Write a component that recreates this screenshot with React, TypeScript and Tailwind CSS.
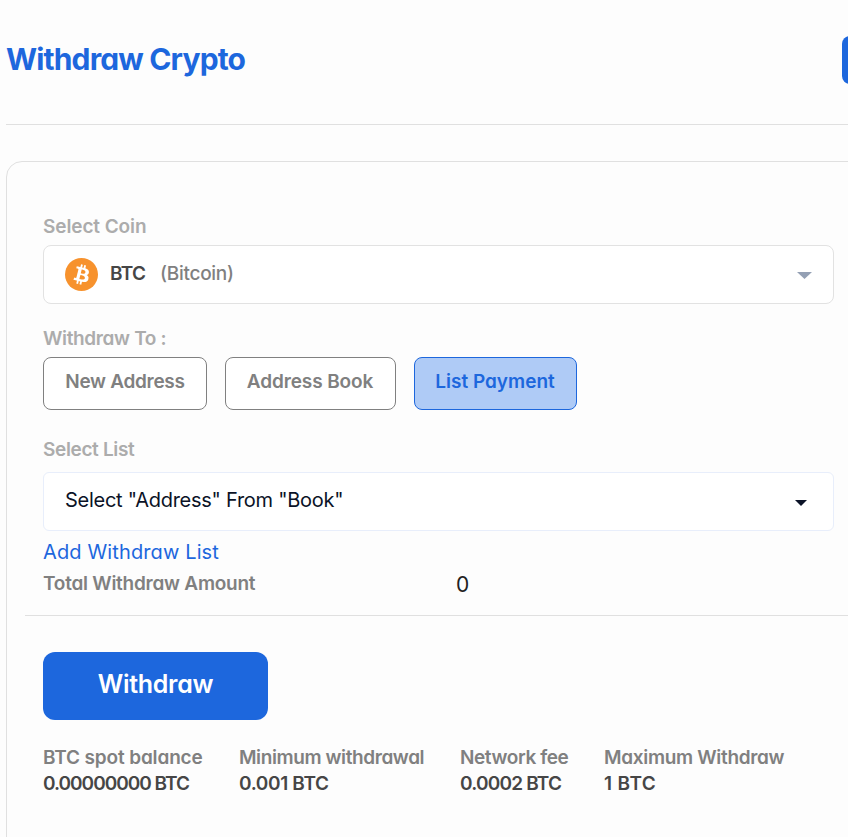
import React from 'react';

interface StatItem {
  label: string;
  value: string;
  className: string;
  labelClassName: string;
  valueClassName: string;
}

const STATS: StatItem[] = [
  {
    label: 'BTC spot balance',
    value: '0.00000000 BTC',
    className: 'w-[196px]',
    labelClassName: 'tracking-[-0.15px]',
    valueClassName: 'tracking-[-1px]',
  },
  {
    label: 'Minimum withdrawal',
    value: '0.001 BTC',
    className: 'w-[221px]',
    labelClassName: 'tracking-[-0.4px]',
    valueClassName: 'tracking-[-0.35px]',
  },
  {
    label: 'Network fee',
    value: '0.0002 BTC',
    className: 'w-[144px]',
    labelClassName: 'tracking-[-0.4px]',
    valueClassName: 'tracking-[-0.8px]',
  },
  {
    label: 'Maximum Withdraw',
    value: '1 BTC',
    className: 'w-[200px]',
    labelClassName: 'tracking-[-0.32px]',
    valueClassName: 'tracking-[0.4px]',
  },
];

const BitcoinIcon: React.FC = () => (
  <svg className="h-[33px] w-[33px] shrink-0" viewBox="0 0 32 32" aria-hidden="true">
    <circle cx="16" cy="16" r="16" fill="#f7922d" />
    <path
      fill="#fff"
      d="M23.189 14.02c.314-2.096-1.283-3.223-3.465-3.975l.708-2.84-1.728-.43-.69 2.765c-.454-.114-.92-.22-1.385-.326l.695-2.783L15.596 6l-.708 2.839c-.376-.086-.746-.17-1.104-.26l.002-.009-2.384-.595-.46 1.846s1.283.294 1.256.312c.7.175.826.638.805 1.006l-.806 3.235c.048.012.11.03.18.057l-.183-.045-1.13 4.532c-.086.212-.303.531-.793.41.018.025-1.256-.313-1.256-.313l-.858 1.978 2.25.561c.418.105.828.215 1.231.318l-.715 2.872 1.727.43.708-2.84c.472.127.93.245 1.378.357l-.706 2.828 1.728.43.715-2.866c2.948.558 5.164.333 6.097-2.333.752-2.146-.037-3.385-1.588-4.192 1.13-.26 1.98-1.003 2.207-2.538zm-3.95 5.538c-.533 2.147-4.148.986-5.32.695l.95-3.805c1.172.293 4.929.872 4.37 3.11zm.535-5.569c-.487 1.953-3.495.96-4.47.717l.86-3.45c.975.243 4.118.696 3.61 2.733z"
    />
  </svg>
);

const Caret: React.FC<{ className: string }> = ({ className }) => (
  <svg className={className} viewBox="0 0 14 7" preserveAspectRatio="none" aria-hidden="true">
    <path fill="currentColor" d="M0 0h14L7 7z" />
  </svg>
);

const Header: React.FC = () => (
  <header className="flex h-[125px] items-start border-b border-[#e0e0e0]">
    <h1 className="mt-[41px] w-[836px] shrink-0 text-[30px] leading-9 font-bold tracking-[-0.85px] text-[#1d67dd]">
      Withdraw Crypto
    </h1>
    <button
      type="button"
      className="mt-9 h-12 w-40 shrink-0 rounded-lg bg-[#1d67dd]"
      aria-label="Withdraw Fiat"
    />
  </header>
);

const App: React.FC = () => (
  <main className="h-[837px] w-full overflow-hidden bg-[#fdfdfd] pl-1.5 font-['Inter',sans-serif] [font-feature-settings:'cv11'] whitespace-nowrap">
    <Header />

    <section className="mt-9 h-[720px] w-[900px] rounded-2xl border border-[#e0e0e0] px-[18px] pt-[53px]">
      <div className="w-[809px] pl-[18px]">
        {/* Coin */}
        <p className="h-[30px] text-[19px] leading-6 font-semibold tracking-[-0.1px] text-[#acacac]">
          Select Coin
        </p>
        <div className="flex h-[59px] items-center rounded-lg border border-[#e2e2e2] bg-white pr-[21px] pl-[21px]">
          <BitcoinIcon />
          <span className="ml-3 w-[50px] text-[19px] font-semibold tracking-[-0.7px] text-[#464646]">
            BTC
          </span>
          <span className="text-[19px] font-medium tracking-[-0.3px] text-[#808080]">
            (Bitcoin)
          </span>
          <Caret className="mt-0.5 ml-auto h-[7px] w-[15px] text-[#94a0b4]" />
        </div>

        {/* Destination */}
        <p className="mt-[23px] h-[30px] text-[19px] leading-6 font-semibold tracking-[-0.35px] text-[#acacac]">
          Withdraw To :
        </p>
        <div className="flex gap-[18px]">
          <button
            type="button"
            className="h-[53px] w-[164px] rounded-lg border border-[#808080] bg-white pb-0.5 text-[19px] font-semibold tracking-[-0.3px] text-[#808080]"
          >
            New Address
          </button>
          <button
            type="button"
            className="h-[53px] w-[171px] rounded-lg border border-[#808080] bg-white pr-px pb-0.5 text-[19px] font-semibold tracking-[-0.1px] text-[#808080]"
          >
            Address Book
          </button>
          <button
            type="button"
            className="h-[53px] w-[163px] rounded-lg border border-[#1d67dd] bg-[#afcbf6] pr-px pb-0.5 text-[19px] font-semibold text-[#1d67dd]"
          >
            List Payment
          </button>
        </div>

        {/* Address list */}
        <p className="mt-7 h-[34px] text-[19px] leading-6 font-semibold tracking-[-0.35px] text-[#acacac]">
          Select List
        </p>
        <div className="flex h-[59px] items-center rounded-md border border-[#e8eefb] bg-white pr-[26px] pl-[21px]">
          <span className="pb-1 text-[20px] font-normal tracking-[-0.27px] text-[#0b1327]">
            Select "Address" From "Book"
          </span>
          <Caret className="mt-0.5 ml-auto h-1.5 w-3 text-[#0b1327]" />
        </div>
        <a href="#" className="mt-2 block w-fit text-[20px] leading-[26px] font-normal tracking-[0.13px] text-[#1d67dd]">
          Add Withdraw List
        </a>
        <div className="mt-[7px] flex h-[23px] items-start leading-6">
          <span className="w-[413px] text-[19px] font-semibold tracking-[-0.25px] text-[#808080]">
            Total Withdraw Amount
          </span>
          <span className="mt-px text-[21px] text-[#212121]">0</span>
        </div>
      </div>

      <hr className="mt-5 w-[900px] border-[#e0e0e0]" />

      <div className="pl-[18px]">
        <button
          type="button"
          className="mt-9 h-[68px] w-[225px] rounded-xl bg-[#1d67dd] pb-[3px] text-[25px] font-semibold tracking-[-0.3px] text-white"
        >
          Withdraw
        </button>
        <dl className="mt-[25px] flex">
          {STATS.map((stat) => (
            <div key={stat.label} className={`shrink-0 text-[19px] leading-[26px] font-semibold ${stat.className}`}>
              <dt className={`text-[#808080] ${stat.labelClassName}`}>{stat.label}</dt>
              <dd className={`text-[#464646] ${stat.valueClassName}`}>{stat.value}</dd>
            </div>
          ))}
        </dl>
      </div>
    </section>
  </main>
);

export default App;
